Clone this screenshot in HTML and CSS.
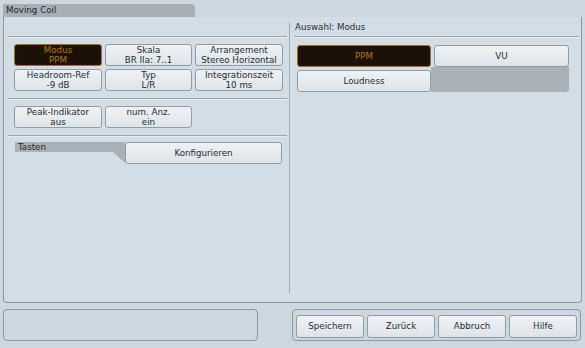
FILE: index.html
```html
<!DOCTYPE html>
<html lang="de">
<head>
    <meta charset="UTF-8">
    <title>Moving Coil</title>
    <link rel="stylesheet" href="styles.css">
</head>
<body>
    <div class="screen">
        <div class="tab">Moving Coil</div>

        <div class="panel">
            <div class="left">
                <div class="head"></div>
                <div class="grid3">
                    <div class="btn active">Modus<br>PPM</div>
                    <div class="btn">Skala<br>BR IIa: 7..1</div>
                    <div class="btn">Arrangement<br>Stereo Horizontal</div>
                    <div class="btn">Headroom-Ref<br>-9 dB</div>
                    <div class="btn">Typ<br>L/R</div>
                    <div class="btn">Integrationszeit<br>10 ms</div>
                </div>
                <div class="rule"></div>
                <div class="grid3">
                    <div class="btn">Peak-Indikator<br>aus</div>
                    <div class="btn">num. Anz.<br>ein</div>
                </div>
                <div class="rule"></div>
                <div class="keys">
                    <div class="keys-label">Tasten</div>
                    <div class="btn single">Konfigurieren</div>
                </div>
            </div>

            <div class="right">
                <div class="head">Auswahl: Modus</div>
                <div class="grid2">
                    <div class="btn single active">PPM</div>
                    <div class="btn single">VU</div>
                    <div class="btn single">Loudness</div>
                    <div class="filler"></div>
                </div>
            </div>
        </div>

        <div class="footer">
            <div class="status"></div>
            <div class="actions">
                <div class="btn single">Speichern</div>
                <div class="btn single">Zurück</div>
                <div class="btn single">Abbruch</div>
                <div class="btn single">Hilfe</div>
            </div>
        </div>
    </div>
</body>
</html>
```

FILE: styles.css
```css
body {
    margin: 0;
    background-color: #cdd7df;
    font-family: "DejaVu Sans", sans-serif;
    font-size: 8.7px;
    color: #262c32;
}

.screen {
    width: 585px;
    height: 348px;
    padding-top: 4px;
    box-sizing: border-box;
}

.tab {
    width: 189px;
    height: 13px;
    margin-left: 3px;
    padding-left: 3px;
    line-height: 13px;
    background-color: #a7afb6;
    border-radius: 0 4px 0 0;
    color: #1f2529;
}

.panel {
    display: flex;
    height: 286px;
    margin: 0 3px 0 3px;
    border: 1px solid #8f989f;
    border-top: none;
    border-radius: 0 0 4px 4px;
    background-color: #d3dde5;
    box-sizing: border-box;
}

.left {
    width: 283px;
    padding-left: 4px;
    box-sizing: border-box;
}

.head {
    height: 19px;
    border-bottom: 1px solid #9ba4ab;
    box-shadow: 0 1px 0 #e6edf2;
}

.grid3 {
    display: grid;
    grid-template-columns: 88px 87px 88px;
    column-gap: 3px;
    row-gap: 3px;
    margin: 7px 0 0 6px;
}

.rule {
    height: 0;
    margin-top: 7px;
    border-bottom: 1px solid #9ba4ab;
    box-shadow: 0 1px 0 #e6edf2;
}

.btn {
    height: 22px;
    box-sizing: border-box;
    border: 1px solid #939ca3;
    border-radius: 3px;
    background: linear-gradient(#eef2f5, #dde4e9);
    text-align: center;
    line-height: 10px;
    color: #252b31;
    white-space: nowrap;
}

.btn.single {
    line-height: 20px;
}

.btn.active {
    background: #1b1109;
    border-color: #a66d1f;
    color: #b7771c;
}

.keys {
    display: flex;
    margin: 6px 0 0 7px;
}

.keys-label {
    width: 110px;
    height: 21px;
    padding: 1px 0 0 3px;
    box-sizing: border-box;
    background-color: #a9b1b8;
    clip-path: polygon(0 0, 110px 0, 110px 21px, 98px 10px, 0 10px);
    line-height: 9px;
    color: #1f2529;
}

.keys .btn {
    width: 157px;
}

.right {
    flex: 1;
    margin: 6px 0 9px 2px;
    padding-left: 4px;
    border-left: 1px solid #a1aab1;
}

.right .head {
    height: 13px;
    margin-right: 2px;
    padding-left: 1px;
    line-height: 9px;
}

.grid2 {
    display: grid;
    grid-template-columns: 134px 135px;
    column-gap: 3px;
    row-gap: 3px;
    margin: 8px 0 0 3px;
}

.filler {
    margin: -3px 0 0 -3px;
    background-color: #a9b1b8;
    border-radius: 0 0 3px 0;
}

.footer {
    display: flex;
    justify-content: space-between;
    margin: 6px 4px 0 3px;
}

.status {
    width: 255px;
    height: 32px;
    box-sizing: border-box;
    border: 1px solid #8f989f;
    border-radius: 4px;
}

.actions {
    display: flex;
    gap: 3px;
    width: 289px;
    height: 32px;
    padding: 5px 3px 2px 3px;
    box-sizing: border-box;
    border: 1px solid #8f989f;
    border-radius: 4px;
}

.actions .btn {
    flex: 1;
    height: 23px;
    line-height: 21px;
}
```
